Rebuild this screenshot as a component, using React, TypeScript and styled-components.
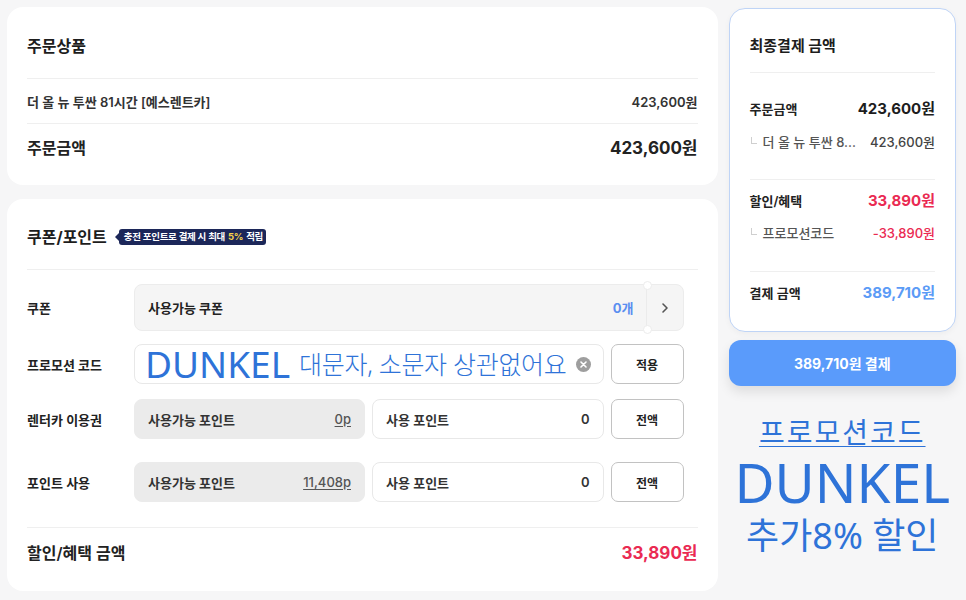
import React from "react";
import styled, { createGlobalStyle, css } from "styled-components";

const GlobalStyle = createGlobalStyle`
	html, body {
		margin: 0;
		padding: 0;
		background: #f6f6f7;
	}
	body {
		font-family: "Inter", "Noto Sans CJK KR", sans-serif;
		color: #222;
		-webkit-font-smoothing: antialiased;
	}
	* {
		box-sizing: border-box;
	}
`;

const Page = styled.div`
	display: flex;
	align-items: flex-start;
	gap: 11px;
	width: 966px;
	height: 600px;
	padding: 7px 10px 0 7px;
	overflow: hidden;
`;

const LeftCol = styled.div`
	width: 711px;
	display: flex;
	flex-direction: column;
	gap: 14px;
`;

const Card = styled.section`
	background: #fff;
	border-radius: 16px;
	padding: 0 20px;
`;

const SectionTitle = styled.div<{ top: number; bottom: number }>`
	display: flex;
	align-items: center;
	gap: 12px;
	padding: ${p => `${p.top}px 0 ${p.bottom}px`};
	height: ${p => p.top + p.bottom + 22}px;
	font-size: 16px;
	font-weight: 700;
	line-height: 22px;
	color: #1d1d1d;
`;

const Divider = styled.hr<{ mt?: number }>`
	margin: ${p => p.mt || 0}px 0 0;
	border: 0;
	height: 1px;
	background: #efefef;
`;

const ItemRow = styled.div`
	display: flex;
	justify-content: space-between;
	align-items: center;
	height: 44px;
	font-size: 13px;
	font-weight: 600;
	color: #333;
`;

const TotalRow = styled.div<{ red?: boolean }>`
	display: flex;
	justify-content: space-between;
	align-items: center;
	padding: ${p => (p.red ? "14px 0 27px" : "13px 0 26px")};
	line-height: 22px;
	font-size: 16px;
	font-weight: 600;
	color: #222;
	strong {
		font-size: 17px;
		font-weight: 700;
		color: ${p => (p.red ? "#ea2a52" : "#222")};
	}
`;

const Badge = styled.span`
	position: relative;
	display: inline-flex;
	align-items: center;
	height: 16px;
	padding: 0 3px 0 5px;
	border-radius: 3px;
	background: #1c2759;
	color: #fff;
	font-size: 9.5px;
	font-weight: 600;
	letter-spacing: -0.3px;
	white-space: nowrap;
	&::before {
		content: "";
		position: absolute;
		left: -4px;
		top: 4px;
		border-style: solid;
		border-width: 4px 4px 4px 0;
		border-color: transparent #1c2759 transparent transparent;
	}
	em {
		font-style: normal;
		font-weight: 700;
		color: #f6d34a;
		margin: 0 3px;
	}
`;

const Form = styled.div`
	display: flex;
	flex-direction: column;
	margin-right: 14px;
`;

const FormRow = styled.div<{ gap: number; h: number }>`
	display: grid;
	grid-template-columns: 107px 1fr;
	align-items: center;
	height: ${p => p.h}px;
	margin-top: ${p => p.gap}px;
`;

const Label = styled.div`
	font-size: 13px;
	font-weight: 600;
	color: #222;
`;

const Fields = styled.div`
	display: flex;
	gap: 7px;
	height: 100%;
`;

const CouponBox = styled.div`
	display: flex;
	width: 100%;
	height: 100%;
	background: #f5f5f5;
	border: 1px solid #ececec;
	border-radius: 8px;
`;

const CouponMain = styled.div`
	flex: 1;
	display: flex;
	justify-content: space-between;
	align-items: center;
	padding: 0 12px 0 13px;
	font-size: 13px;
	font-weight: 600;
	color: #222;
	b {
		color: #5b8ef0;
		font-weight: 700;
	}
`;

const CouponArrow = styled.div`
	position: relative;
	width: 37px;
	display: flex;
	align-items: center;
	justify-content: center;
	border-left: 1px solid #ebebeb;
	&::before,
	&::after {
		content: "";
		position: absolute;
		left: -4px;
		width: 7px;
		height: 7px;
		border-radius: 50%;
		background: #fff;
		border: 1px solid #ececec;
	}
	&::before {
		top: -4px;
	}
	&::after {
		bottom: -4px;
	}
`;

const Field = styled.div<{ grey?: boolean; w?: number }>`
	display: flex;
	justify-content: space-between;
	align-items: center;
	${p => (p.w ? css`width: ${p.w}px;` : css`flex: 1;`)}
	height: 100%;
	padding: 0 13px 0 13px;
	border-radius: 8px;
	font-size: 13px;
	font-weight: 600;
	color: #333;
	${p =>
		p.grey
			? css`
					background: #ebebeb;
					border: 1px solid #ebebeb;
			  `
			: css`
					background: #fff;
					border: 1px solid #e8e8e8;
			  `}
	u {
		font-weight: 500;
		color: #555;
		text-underline-offset: 2px;
	}
`;

const PromoInput = styled.div`
	flex: 1;
	display: flex;
	align-items: center;
	gap: 9px;
	padding: 0 12px 0 10px;
	background: #fff;
	border: 1px solid #e8e8e8;
	border-radius: 8px;
	color: #2e73d8;
	font-family: "Noto Sans", "Noto Sans CJK KR", sans-serif;
	white-space: nowrap;
`;

const PromoCode = styled.span`
	font-size: 37px;
	line-height: 38px;
`;

const PromoHint = styled.span`
	font-size: 25px;
	line-height: 38px;
	font-weight: 300;
	letter-spacing: -0.3px;
`;

const ClearIcon = styled.span`
	margin-left: auto;
	width: 15px;
	height: 15px;
	display: inline-flex;
	align-items: center;
	justify-content: center;
	border-radius: 50%;
	background: #9e9e9e;
`;

const SmallButton = styled.button`
	width: 73px;
	height: 100%;
	background: #fff;
	border: 1px solid #c2c2c2;
	border-radius: 7px;
	font-family: inherit;
	font-size: 12px;
	font-weight: 600;
	color: #222;
	padding: 0;
`;

const RightCol = styled.div`
	width: 228px;
	margin-top: 1px;
	display: flex;
	flex-direction: column;
`;

const SummaryCard = styled.aside`
	background: #fff;
	border: 1px solid #bfd4f6;
	border-radius: 16px;
	padding: 0 20px;
	height: 324px;
	box-shadow: 0 2px 6px rgba(0, 0, 0, 0.04);
`;

const SummaryTitle = styled.div`
	padding: 26px 0 15px;
	line-height: 22px;
	font-size: 15px;
	font-weight: 700;
	color: #1d1d1d;
`;

const SummaryGroup = styled.div<{ top: number; bottom: number; gap?: number }>`
	display: flex;
	flex-direction: column;
	gap: ${p => p.gap ?? 11}px;
	padding: ${p => `${p.top}px 0 ${p.bottom}px`};
`;

const SumRow = styled.div<{ tone?: "red" | "blue" }>`
	display: flex;
	justify-content: space-between;
	align-items: center;
	line-height: 22px;
	font-size: 13px;
	font-weight: 600;
	color: #222;
	strong {
		font-size: 15px;
		font-weight: 700;
		color: ${p => (p.tone === "red" ? "#ea2a52" : p.tone === "blue" ? "#5b9bf6" : "#1d1d1d")};
	}
`;

const SubRow = styled.div<{ red?: boolean }>`
	display: flex;
	justify-content: space-between;
	align-items: center;
	line-height: 20px;
	font-size: 13px;
	font-weight: 500;
	color: #555;
	span:first-child {
		display: flex;
		align-items: center;
		gap: 6px;
	}
	b {
		font-weight: 500;
		color: ${p => (p.red ? "#ea2a52" : "#444")};
	}
`;

const Corner = styled.i`
	display: inline-block;
	width: 6px;
	height: 7px;
	margin: -4px 0 0 1px;
	border-left: 1px solid #cfcfcf;
	border-bottom: 1px solid #cfcfcf;
`;

const PayButton = styled.button`
	margin-top: 8px;
	height: 46px;
	width: 100%;
	border: 0;
	border-radius: 12px;
	background: #5a9bfb;
	color: #fff;
	font-family: inherit;
	font-size: 14px;
	font-weight: 700;
	box-shadow: 0 6px 12px rgba(0, 0, 0, 0.1);
`;

const PromoNote = styled.div`
	margin-top: 28px;
	display: flex;
	flex-direction: column;
	align-items: center;
	color: #2e73d8;
	font-family: "Noto Sans", "Noto Sans CJK KR", sans-serif;
	font-weight: 400;
`;

const NoteLine = styled.div<{ size: number; lh: number; underline?: boolean; spacing?: number }>`
	font-size: ${p => p.size}px;
	line-height: ${p => p.lh}px;
	height: ${p => p.lh}px;
	letter-spacing: ${p => p.spacing || 0}px;
	text-decoration: ${p => (p.underline ? "underline" : "none")};
	text-decoration-thickness: 1px;
	text-underline-offset: 3px;
	white-space: nowrap;
`;

const App: React.FC = () => {
	return (
		<>
			<GlobalStyle />
			<Page>
				<LeftCol>
					<Card>
						<SectionTitle top={28} bottom={21}>
							주문상품
						</SectionTitle>
						<Divider />
						<ItemRow>
							<span>더 올 뉴 투싼 81시간 [예스렌트카]</span>
							<span>423,600원</span>
						</ItemRow>
						<Divider />
						<TotalRow>
							<span>주문금액</span>
							<strong>423,600원</strong>
						</TotalRow>
					</Card>

					<Card>
						<SectionTitle top={27} bottom={21}>
							쿠폰/포인트
							<Badge>
								충전 포인트로 결제 시 최대<em>5%</em>적립
							</Badge>
						</SectionTitle>
						<Divider />
						<Form>
							<FormRow gap={14} h={47}>
								<Label>쿠폰</Label>
								<CouponBox>
									<CouponMain>
										<span>사용가능 쿠폰</span>
										<b>0개</b>
									</CouponMain>
									<CouponArrow>
										<svg width="8" height="12" viewBox="0 0 8 12">
											<path d="M2 2l4 4-4 4" fill="none" stroke="#555" strokeWidth="1.6" strokeLinecap="round" strokeLinejoin="round" />
										</svg>
									</CouponArrow>
								</CouponBox>
							</FormRow>
							<FormRow gap={13} h={40}>
								<Label>프로모션 코드</Label>
								<Fields>
									<PromoInput>
										<PromoCode>DUNKEL</PromoCode>
										<PromoHint>대문자, 소문자 상관없어요</PromoHint>
										<ClearIcon>
											<svg width="7" height="7" viewBox="0 0 7 7">
												<path d="M1 1l5 5M6 1L1 6" stroke="#fff" strokeWidth="1.6" strokeLinecap="round" />
											</svg>
										</ClearIcon>
									</PromoInput>
									<SmallButton>적용</SmallButton>
								</Fields>
							</FormRow>
							<FormRow gap={15} h={40}>
								<Label>렌터카 이용권</Label>
								<Fields>
									<Field grey w={231}>
										<span>사용가능 포인트</span>
										<u>0p</u>
									</Field>
									<Field>
										<span>사용 포인트</span>
										<span>0</span>
									</Field>
									<SmallButton>전액</SmallButton>
								</Fields>
							</FormRow>
							<FormRow gap={23} h={40}>
								<Label>포인트 사용</Label>
								<Fields>
									<Field grey w={231}>
										<span>사용가능 포인트</span>
										<u>11,408p</u>
									</Field>
									<Field>
										<span>사용 포인트</span>
										<span>0</span>
									</Field>
									<SmallButton>전액</SmallButton>
								</Fields>
							</FormRow>
						</Form>
						<Divider mt={25} />
						<TotalRow red>
							<span>할인/혜택 금액</span>
							<strong>33,890원</strong>
						</TotalRow>
					</Card>
				</LeftCol>

				<RightCol>
					<SummaryCard>
						<SummaryTitle>최종결제 금액</SummaryTitle>
						<Divider />
						<SummaryGroup top={25} bottom={27} gap={12}>
							<SumRow>
								<span>주문금액</span>
								<strong>423,600원</strong>
							</SumRow>
							<SubRow>
								<span>
									<Corner />더 올 뉴 투싼 8...
								</span>
								<b>423,600원</b>
							</SubRow>
						</SummaryGroup>
						<Divider />
						<SummaryGroup top={10} bottom={28}>
							<SumRow tone="red">
								<span>할인/혜택</span>
								<strong>33,890원</strong>
							</SumRow>
							<SubRow red>
								<span>
									<Corner />프로모션코드
								</span>
								<b>-33,890원</b>
							</SubRow>
						</SummaryGroup>
						<Divider />
						<SummaryGroup top={10} bottom={0}>
							<SumRow tone="blue">
								<span>결제 금액</span>
								<strong>389,710원</strong>
							</SumRow>
						</SummaryGroup>
					</SummaryCard>
					<PayButton>389,710원 결제</PayButton>
					<PromoNote>
						<NoteLine size={28} lh={36} underline spacing={2}>
							프로모션코드
						</NoteLine>
						<NoteLine size={55} lh={64}>
							DUNKEL
						</NoteLine>
						<NoteLine size={36} lh={44}>
							추가8% 할인
						</NoteLine>
					</PromoNote>
				</RightCol>
			</Page>
		</>
	);
};

export default App;
